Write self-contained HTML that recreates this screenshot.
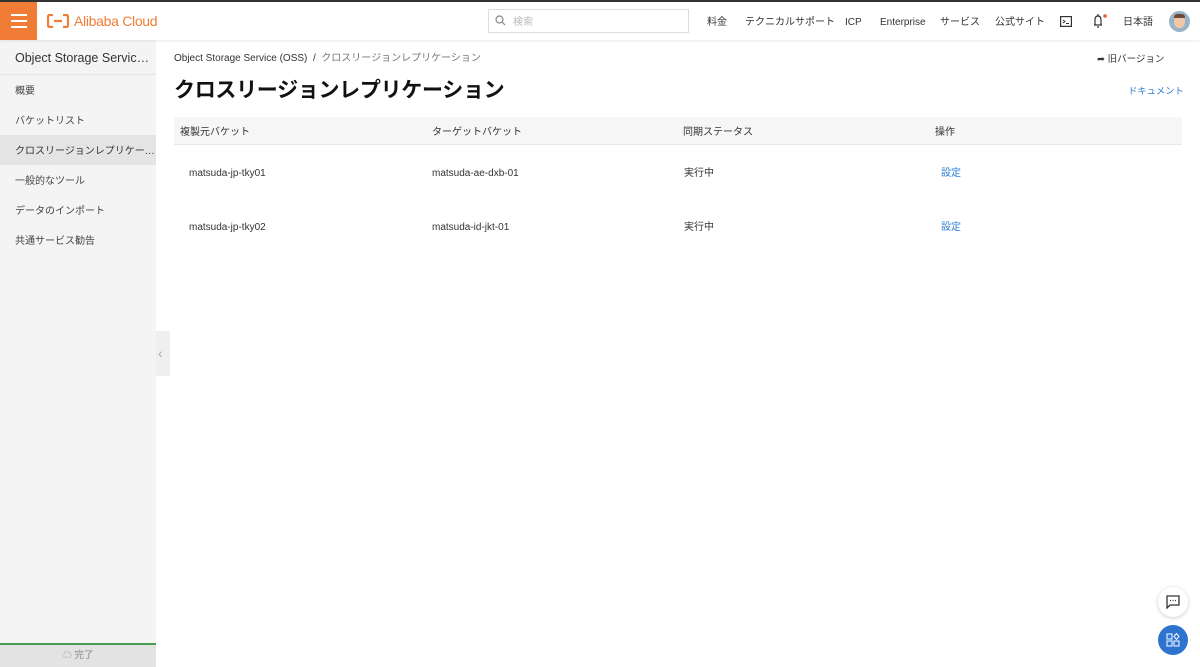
<!DOCTYPE html>
<html><head><meta charset="utf-8"><style>
*{margin:0;padding:0;box-sizing:border-box}
body{width:1200px;height:667px;overflow:hidden;background:#fff;font-family:"Liberation Sans","Noto Sans CJK JP",sans-serif;color:#333;position:relative;line-height:1}
div,span{line-height:1}
.topline{position:absolute;left:0;top:0;width:1200px;height:2px;background:#333}
.hdr{position:absolute;top:2px;left:0;width:1200px;height:38px;background:#fff;box-shadow:0 1px 3px rgba(0,0,0,.08);z-index:2}
.burger{position:absolute;left:0;top:0;width:37px;height:38px;background:#f07c35}
.burger i{position:absolute;left:11px;width:16px;height:2px;background:#fff}
.logo{position:absolute;left:47px;top:12px;color:#f07c35;font-size:14px;display:flex;align-items:center;gap:5px;letter-spacing:-.3px}
.search{position:absolute;left:488px;top:7px;width:201px;height:24px;border:1px solid #ddd;font-size:10px;color:#bbb;padding:8px 0 0 24px}
.nav{position:absolute;top:16px;font-size:10px;color:#333;height:12px}
.side{position:absolute;left:0;top:40px;width:156px;height:627px;background:#f4f4f4}
.side .t{height:35px;border-bottom:1px solid #e6e6e6;font-size:12.5px;padding:12px 0 0 15px;color:#333}
.side .it{height:30px;font-size:10px;padding:12px 0 0 15px;color:#444}
.side .sel{background:#e4e4e4;color:#333}
.foot{position:absolute;left:0;top:643px;width:156px;height:24px;background:#e3e3e3;border-top:2px solid #4a9b4f;font-size:9.5px;color:#888;text-align:center;padding-top:6px}
.tab{position:absolute;left:156px;top:331px;width:14px;height:45px;background:#efefef;color:#aaa;font-size:14px;padding:15px 0 0 2px}
.crumb{position:absolute;left:174px;top:54px;font-size:10px;color:#333}
.crumb span{color:#777}
h1{position:absolute;left:174px;top:80px;font-size:21px;font-weight:bold;color:#111;line-height:1;letter-spacing:-.3px}
.old{position:absolute;left:1097px;top:55px;font-size:9.5px;color:#333}
.doc{position:absolute;left:1128px;top:87px;font-size:9.3px;color:#2f7fd6}
.thead{position:absolute;left:174px;top:117px;width:1008px;height:28px;background:#f6f6f6;border-bottom:1px solid #e8e8e8;font-size:10px;color:#333}
.thead span{top:11px}
.c{position:absolute;font-size:10px;color:#333;height:12px}
.blue{color:#2f7fd6}
.fab{position:absolute;width:30px;height:30px;border-radius:50%}
</style></head><body>
<div class="topline"></div>
<div class="hdr">
 <div class="burger"><i style="top:12px"></i><i style="top:18px"></i><i style="top:24px"></i></div>
 <div class="logo"><svg width="22" height="14" viewBox="0 0 22 14"><path d="M6 1H3Q1 1 1 3V11Q1 13 3 13H6M16 1H19Q21 1 21 3V11Q21 13 19 13H16M7 7H15" fill="none" stroke="#f07c35" stroke-width="2.2"/></svg><span>Alibaba Cloud</span></div>
 <div class="search"><svg style="position:absolute;left:6px;top:5px" width="11" height="11" viewBox="0 0 11 11"><circle cx="4.5" cy="4.5" r="3.5" fill="none" stroke="#888" stroke-width="1.2"/><path d="M7 7L10 10" stroke="#888" stroke-width="1.2"/></svg>検索</div>
 <div class="nav" style="left:707px">料金</div>
 <div class="nav" style="left:745px">テクニカルサポート</div>
 <div class="nav" style="left:845px">ICP</div>
 <div class="nav" style="left:880px">Enterprise</div>
 <div class="nav" style="left:940px">サービス</div>
 <div class="nav" style="left:995px">公式サイト</div>
 <svg style="position:absolute;left:1060px;top:14px" width="12" height="11" viewBox="0 0 12 11"><rect x=".6" y=".6" width="10.8" height="9.8" fill="none" stroke="#333" stroke-width="1.2"/><path d="M3 4l2 1.5L3 7M6 7.5h3" stroke="#333" fill="none"/></svg>
 <svg style="position:absolute;left:1091px;top:11px" width="16" height="16" viewBox="0 0 16 16"><path d="M3 12H11M4 12V7Q4 3 7 3Q10 3 10 7V12M6 14H8M7 1V3" fill="none" stroke="#333" stroke-width="1.2"/><circle cx="14" cy="3" r="1.8" fill="#f05a28"/></svg>
 <div class="nav" style="left:1123px">日本語</div>
 <div style="position:absolute;left:1169px;top:9px;width:21px;height:21px;border-radius:50%;background:#9bb3c7;overflow:hidden"><div style="position:absolute;left:5px;top:4px;width:11px;height:13px;border-radius:45%;background:#f0c8a8"></div><div style="position:absolute;left:5px;top:3px;width:11px;height:4px;background:#6b4a3a;border-radius:3px 3px 0 0"></div></div>
</div>
<div class="side">
 <div class="t">Object Storage Servic…</div>
 <div class="it">概要</div>
 <div class="it">バケットリスト</div>
 <div class="it sel">クロスリージョンレプリケー…</div>
 <div class="it">一般的なツール</div>
 <div class="it">データのインポート</div>
 <div class="it">共通サービス勧告</div>
</div>
<div class="foot">☁ 完了</div>
<div class="tab">‹</div>
<div class="crumb">Object Storage Service (OSS) &nbsp;/&nbsp; <span>クロスリージョンレプリケーション</span></div>
<h1>クロスリージョンレプリケーション</h1>
<div class="old">➦ 旧バージョン</div>
<div class="doc">ドキュメント</div>
<div class="thead">
 <span style="position:absolute;left:6px">複製元バケット</span>
 <span style="position:absolute;left:258px">ターゲットバケット</span>
 <span style="position:absolute;left:509px">同期ステータス</span>
 <span style="position:absolute;left:761px">操作</span>
</div>
<div class="c" style="left:189px;top:169px">matsuda-jp-tky01</div>
<div class="c" style="left:432px;top:169px">matsuda-ae-dxb-01</div>
<div class="c" style="left:684px;top:169px">実行中</div>
<div class="c blue" style="left:941px;top:169px">設定</div>
<div class="c" style="left:189px;top:223px">matsuda-jp-tky02</div>
<div class="c" style="left:432px;top:223px">matsuda-id-jkt-01</div>
<div class="c" style="left:684px;top:223px">実行中</div>
<div class="c blue" style="left:941px;top:223px">設定</div>
<div class="fab" style="left:1158px;top:587px;background:#fff;box-shadow:0 1px 4px rgba(0,0,0,.2)"><svg style="position:absolute;left:8px;top:8px" width="14" height="14" viewBox="0 0 14 14"><path d="M1 1H13V10H4L1 13Z" fill="none" stroke="#333" stroke-width="1.3"/><path d="M4 5.5h1M6.5 5.5h1M9 5.5h1" stroke="#333" stroke-width="1.3"/></svg></div>
<div class="fab" style="left:1158px;top:625px;background:#2f73d0"><svg style="position:absolute;left:8px;top:8px" width="14" height="14" viewBox="0 0 14 14"><rect x="1" y="1" width="5" height="5" fill="none" stroke="#fff"/><rect x="1" y="8" width="5" height="5" fill="none" stroke="#fff"/><rect x="8" y="8" width="5" height="5" fill="none" stroke="#fff"/><path d="M10.5 0.5L13 3.5L10.5 6.5L8 3.5Z" fill="none" stroke="#fff"/></svg></div>
</body></html>
